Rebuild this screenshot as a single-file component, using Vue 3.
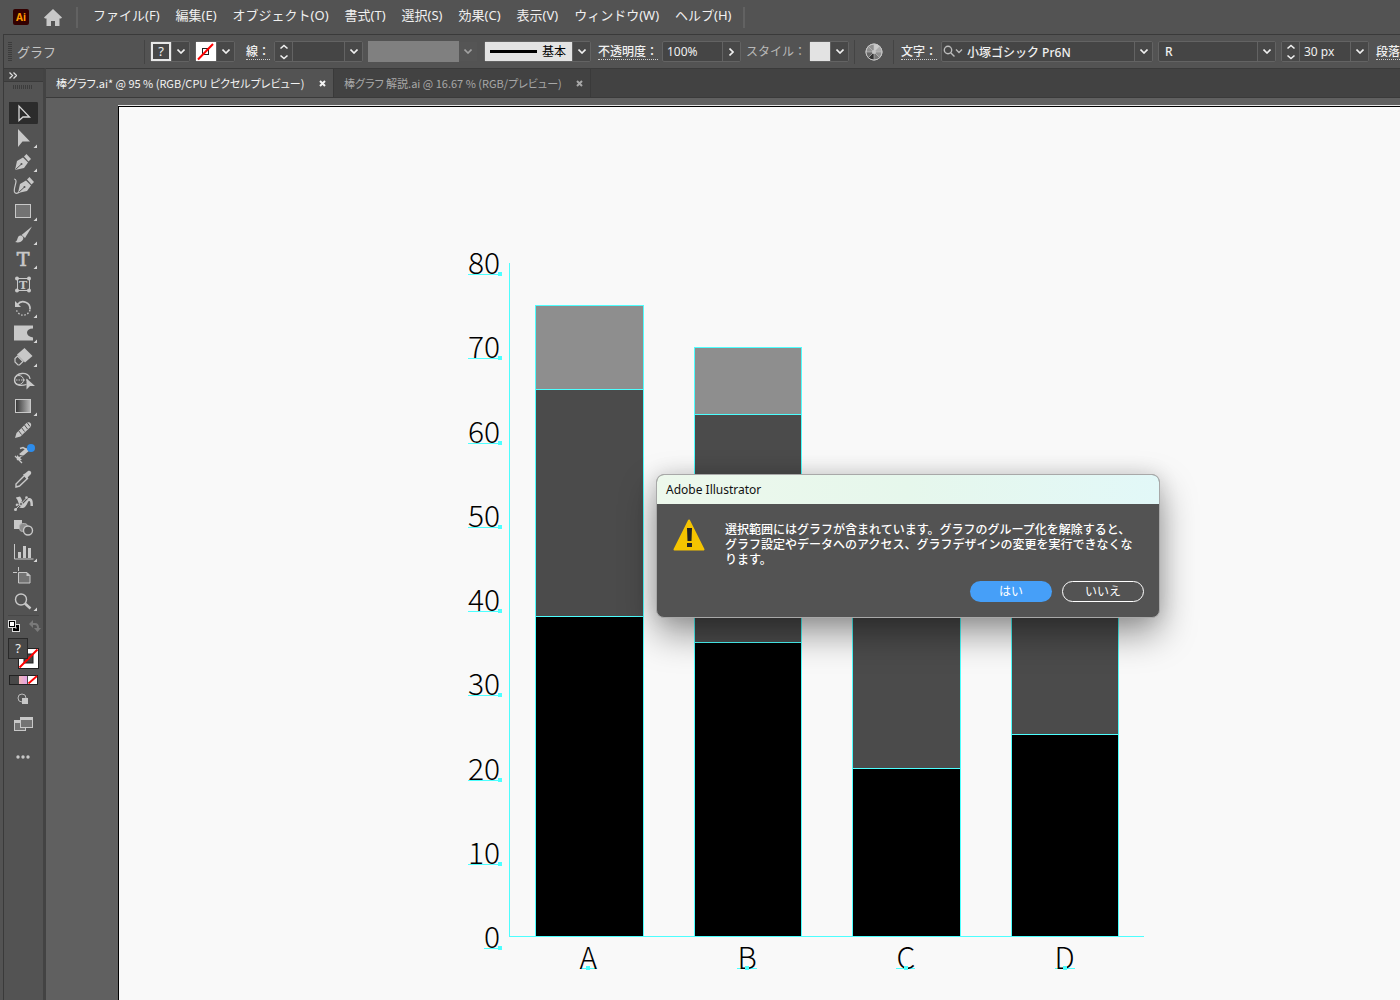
<script setup>
const menus = [
  'ファイル(F)', '編集(E)', 'オブジェクト(O)', '書式(T)', '選択(S)',
  '効果(C)', '表示(V)', 'ウィンドウ(W)', 'ヘルプ(H)',
]

const nib = '<path d="M7 20l2-9 6-3.500 5 5-4 5.500z" fill="#c8c8c8"/><path d="M16 6.500l2.500-2.500 4.500 5-2.500 2.500z" fill="#c8c8c8"/><path d="M7.500 19.500l5.500-5" stroke="#535353"/><circle cx="13.500" cy="14" r="1" fill="#535353"/>'

const tools = [
  { name: '選択', active: true, art: '<path d="M11 5v14.500l4-3.500h6.500z" fill="none" stroke="#d8d8d8" stroke-width="1.300"/>' },
  { name: 'ダイレクト選択', more: true, art: '<path d="M10 3v18l4.500-5.500h7.500z" fill="#c8c8c8"/>' },
  { name: 'ペン', more: true, art: nib },
  { name: '曲線', art: '<g transform="translate(3 -1)">' + nib + '</g><path d="M6 5c5 0-1 9 .5 13 1 2 3 1.500 5 0" fill="none" stroke="#c8c8c8" stroke-width="1.200"/>' },
  { name: '長方形', more: true, art: '<rect x="7.500" y="5.500" width="15" height="13" fill="#737373" stroke="#c8c8c8"/>' },
  { name: 'ブラシ', more: true, art: '<path d="M24 3.500l-7 11.500-3.500-3z" fill="#c8c8c8"/><path d="M12 12.500c2.500 0 4 2 3 4-1.500 3-5 3.500-8 2.500 3-1 2-6 5-6.500z" fill="#c8c8c8"/>' },
  { name: '文字', more: true, art: '<text x="15" y="19" text-anchor="middle" font-family="DejaVu Serif, serif" font-size="19" fill="#c8c8c8" stroke="#c8c8c8" stroke-width=".7">T</text>' },
  { name: '文字タッチ', art: '<rect x="9.500" y="6.500" width="12" height="12" fill="none" stroke="#c8c8c8"/><g fill="#c8c8c8"><circle cx="9" cy="6.500" r="2"/><circle cx="21" cy="6.500" r="2"/><circle cx="9" cy="18.500" r="2"/><circle cx="21" cy="18.500" r="2"/></g><text x="15" y="16.500" text-anchor="middle" font-family="DejaVu Serif, serif" font-size="11" font-weight="700" fill="#c8c8c8">T</text>' },
  { name: '回転', more: true, art: '<path d="M9.500 8.500a7 7 0 0 1 12.500 5" fill="none" stroke="#c8c8c8" stroke-width="1.700"/><path d="M22 14a7 7 0 0 1-13.500 0" fill="none" stroke="#c8c8c8" stroke-width="1.400" stroke-dasharray="1.500 1.700"/><path d="M7 5v6h6z" fill="#c8c8c8"/>' },
  { name: '線幅', more: true, art: '<path d="M6 4.500h19v3c-8 0-8 8 0 9v3h-19z" fill="#c8c8c8"/>' },
  { name: '消しゴム', more: true, art: '<path d="M16.500 3l8 8-7.500 6.500-8-8z" fill="#c8c8c8"/><path d="M9.500 11l5.500 5.500-3.500 3.500h-1.500l-3-3v-3.500z" fill="#535353" stroke="#c8c8c8" stroke-width="1.200"/>' },
  { name: 'シェイプ形成', art: '<ellipse cx="11" cy="11" rx="4.500" ry="4.500" fill="none" stroke="#c8c8c8"/><path d="M6.500 11c0-8 15-9 15.500-1M6.500 11c0 6 7 6 12 4.500" fill="none" stroke="#c8c8c8" stroke-width="1.300"/><path d="M8 11h12" stroke="#c8c8c8" stroke-dasharray="1.500 1"/><path d="M18.500 9.500v11l3.500-3.500h5z" fill="#c8c8c8"/>' },
  { name: 'グラデーション', more: true, art: '<defs><linearGradient id="ramp"><stop stop-color="#333"/><stop offset="1" stop-color="#bbb"/></linearGradient></defs><rect x="7.500" y="5.500" width="15" height="13" fill="url(#ramp)" stroke="#c8c8c8"/>' },
  { name: '鉛筆', art: '<path d="M7 20l1.500-5 10-10c3-2 6 1 4 4l-10 9.500z" fill="#c8c8c8"/><path d="M10.500 12.500l3 4M13.500 9.500l3 4M16.500 7l3 4M19 4.500l3 4" stroke="#535353"/>' },
  { name: 'ものさし', badge: true, art: '<path d="M9 18l10-9.500M7 14l7 7" stroke="#c8c8c8" stroke-width="1.300"/><path d="M9 13v5h5z" fill="#c8c8c8"/><path d="M12.500 13.500l7-6" stroke="#c8c8c8" stroke-width="4"/><path d="M12 6.500l3-1 3.500 2" fill="none" stroke="#c8c8c8" stroke-width="1.500"/><path d="M11 13.500l7 1" stroke="#535353"/>' },
  { name: 'スポイト', art: '<path d="M16.500 8.500l3 3-8 7.500-3.500 1v-3z" fill="none" stroke="#c8c8c8" stroke-width="1.400"/><path d="M15 7.500l2-1 3-2.500c2-1 4 1 3 3l-3 3-1 2.500z" fill="#c8c8c8"/>' },
  { name: 'パペットワープ', art: '<path d="M8 6.500l4-1c2 2 2 5 3 6 2 0 3-4 6-4.500 3 0 4 2 4 8h-2.500c0-3 0-5-1.500-5s-2 6-6 7c-3 .500-6-1-7.500-3l1-1.500 2.500.500c-1-2-1-4-3-6z" fill="#c8c8c8"/><path d="M8 18l11-11" stroke="#535353" stroke-width="2.500"/><path d="M7.500 18.500l11-11.500" stroke="#c8c8c8"/><circle cx="7.500" cy="18.500" r="1.500" fill="#c8c8c8"/><circle cx="13" cy="13" r="1.500" fill="#535353" stroke="#c8c8c8"/><circle cx="18.500" cy="6.500" r="1.300" fill="#c8c8c8"/>' },
  { name: 'ブレンド', art: '<rect x="6" y="4" width="8" height="9" fill="#c8c8c8"/><rect x="11.500" y="7.500" width="8" height="8" rx="3" fill="#8c8c8c" stroke="#b0b0b0"/><circle cx="20" cy="14.500" r="4.500" fill="#535353" stroke="#c8c8c8" stroke-width="1.400"/>' },
  { name: '棒グラフ', more: true, art: '<path d="M6.500 4v15h19" fill="none" stroke="#c8c8c8"/><path d="M10 12h3v6h-3zM15 6h3v12h-3zM20 8h3v10h-3z" fill="#c8c8c8"/>' },
  { name: 'アートボード', art: '<path d="M10.500 8.500h8.500l3 3v7.500h-11.500z" fill="#737373" stroke="#c8c8c8"/><path d="M10.500 3v4M5 8.500h4" stroke="#c8c8c8"/><path d="M18.500 8v4h4" fill="#c8c8c8"/>' },
  { name: 'ズーム', more: true, art: '<circle cx="13" cy="10.500" r="5.500" fill="none" stroke="#c8c8c8" stroke-width="1.400"/><path d="M17 14.500l5.500 5" stroke="#c8c8c8" stroke-width="2.500"/>' },
]

const axisMax = 80
const ticks = [80, 70, 60, 50, 40, 30, 20, 10, 0]
const columns = [
  { label: 'A', values: [10, 27, 38] },
  { label: 'B', values: [8, 27, 35] },
  { label: 'C', values: [5, 25, 20] },
  { label: 'D', values: [6, 20, 24] },
]
const share = (v) => ({ height: (v / axisMax) * 100 + '%' })
</script>

<template>
  <div class="app">
    <header class="menubar">
      <span class="logo">Ai</span>
      <button class="home" aria-label="ホーム">
        <svg width="18" height="17" viewBox="0 0 18 17"><path d="M9 0l9 8.500-1 1h-1.500V17h-4.500v-5H7v5H2.500V9.500H1l-1-1z" fill="#c8c8c8" /></svg>
      </button>
      <i class="bar-sep"></i>
      <nav class="menus">
        <button v-for="m in menus" :key="m">{{ m }}</button>
      </nav>
      <i class="bar-sep"></i>
    </header>

    <section class="options">
      <i class="grip"></i>
      <span class="target">グラフ</span>
      <i class="sep"></i>
      <div class="field w40">
        <button class="swatch unknown">?</button>
        <button class="drop" aria-label="塗り"><svg class="chev" viewBox="0 0 8 5"><path d="M.5.5L4 4 7.500.5" /></svg></button>
      </div>
      <div class="field w40">
        <button class="swatch none" aria-label="線なし">
          <svg width="19" height="19" viewBox="0 0 19 19"><rect x="6.500" y="6.500" width="6" height="6" fill="none" stroke="#222" /><path d="M2 17.500L17 2" stroke="#f00" stroke-width="2" /></svg>
        </button>
        <button class="drop" aria-label="線"><svg class="chev" viewBox="0 0 8 5"><path d="M.5.5L4 4 7.500.5" /></svg></button>
      </div>
      <label class="cap w29 link" for="stroke"><span>線：</span></label>
      <div class="field w89">
        <button class="step" aria-label="増減"><svg width="10" height="16" viewBox="0 0 10 16"><path d="M1.500 4.500L5 1.500l3.500 3M1.500 11.500L5 14.500l3.500-3" /></svg></button>
        <input id="stroke" type="text" value="" />
        <button class="drop" aria-label="線幅"><svg class="chev" viewBox="0 0 8 5"><path d="M.5.5L4 4 7.500.5" /></svg></button>
      </div>
      <div class="profile">
        <i></i>
        <button class="drop dim" aria-label="プロファイル" disabled><svg class="chev" viewBox="0 0 8 5"><path d="M.5.5L4 4 7.500.5" /></svg></button>
      </div>
      <div class="field brush">
        <button class="basic"><i></i>基本</button>
        <button class="drop" aria-label="ブラシ"><svg class="chev" viewBox="0 0 8 5"><path d="M.5.5L4 4 7.500.5" /></svg></button>
      </div>
      <label class="cap w61 link" for="opacity"><span>不透明度：</span></label>
      <div class="field w79">
        <input id="opacity" type="text" value="100%" />
        <button class="drop" aria-label="不透明度"><svg width="5" height="8" viewBox="0 0 5 8"><path d="M.5.5L4 4 .5 7.500" /></svg></button>
      </div>
      <span class="cap w58 soft">スタイル：</span>
      <div class="field w40">
        <button class="swatch plain" aria-label="グラフィックスタイル"></button>
        <button class="drop" aria-label="スタイル"><svg class="chev" viewBox="0 0 8 5"><path d="M.5.5L4 4 7.500.5" /></svg></button>
      </div>
      <i class="sep"></i>
      <button class="wheel" aria-label="オブジェクトを再配色">
        <svg width="18" height="18" viewBox="0 0 18 18"><circle cx="9" cy="9" r="8" fill="#8f8f8f" stroke="#c4c4c4" /><path d="M9 9V1a8 8 0 0 1 5.700 2.300z" fill="#c9c9c9" /><path d="M9 9l5.700-5.700A8 8 0 0 1 17 9z" fill="#aaa" /><path d="M9 9H1a8 8 0 0 0 2.300 5.700z" fill="#666" /><path d="M9 9l-5.700 5.700A8 8 0 0 0 9 17z" fill="#333" /><path d="M9 9l5.700 5.700A8 8 0 0 1 9 17z" fill="#777" /><path d="M9 1v16M1 9h16M3.300 3.300l11.400 11.400M3.300 14.700L14.700 3.300" stroke="#c4c4c4" stroke-width=".6" /><circle cx="9" cy="9" r="8" fill="none" stroke="#c4c4c4" /><circle cx="9" cy="9" r="2" fill="#c4c4c4" /></svg>
      </button>
      <i class="sep"></i>
      <label class="cap w37 link" for="font"><span>文字：</span></label>
      <div class="field w212">
        <svg class="search" width="20" height="13" viewBox="0 0 20 13"><circle cx="5" cy="5" r="3.700" /><path d="M7.700 7.700L11.500 11.500M13 4.500l3 3 3-3" /></svg>
        <input id="font" type="text" class="strong" value="小塚ゴシック Pr6N" />
        <button class="drop" aria-label="フォント"><svg class="chev" viewBox="0 0 8 5"><path d="M.5.5L4 4 7.500.5" /></svg></button>
      </div>
      <div class="field w118">
        <input type="text" class="strong pad" value="R" aria-label="フォントスタイル" />
        <button class="drop" aria-label="スタイル"><svg class="chev" viewBox="0 0 8 5"><path d="M.5.5L4 4 7.500.5" /></svg></button>
      </div>
      <div class="field w88">
        <button class="step" aria-label="増減"><svg width="10" height="16" viewBox="0 0 10 16"><path d="M1.500 4.500L5 1.500l3.500 3M1.500 11.500L5 14.500l3.500-3" /></svg></button>
        <input type="text" value="30 px" aria-label="フォントサイズ" />
        <button class="drop" aria-label="サイズ"><svg class="chev" viewBox="0 0 8 5"><path d="M.5.5L4 4 7.500.5" /></svg></button>
      </div>
      <span class="cap link"><span>段落</span></span>
    </section>

    <div class="workspace">
      <aside class="tools">
        <div class="tools-head">
          <svg width="8" height="7" viewBox="0 0 8 7"><path d="M.5.5l3 3-3 3M4.500.5l3 3-3 3" fill="none" stroke="#ddd" stroke-width="1.300" /></svg>
        </div>
        <i class="grip-h"></i>
        <div class="tool-list">
          <button v-for="t in tools" :key="t.name" :class="{ active: t.active }" :aria-label="t.name">
            <svg width="30" height="24" viewBox="0 0 30 24">
              <g v-html="t.art"></g>
              <path v-if="t.more" d="M29 18.500V22h-3.500z" fill="#d8d8d8" />
              <circle v-if="t.badge" cx="23" cy="6" r="4" fill="#2d8ceb" />
            </svg>
          </button>
        </div>
        <i class="rule"></i>
        <svg width="36" height="154" viewBox="0 0 36 154">
          <g transform="translate(-5 -616)">
            <rect x="12.500" y="624.500" width="7" height="7" fill="#000" stroke="#ddd" />
            <rect x="14.500" y="626.500" width="3" height="3" fill="#535353" stroke="#000" />
            <rect x="8.500" y="620.500" width="7" height="7" fill="#fff" stroke="#ddd" />
            <rect x="9.500" y="621.500" width="5" height="5" fill="#fff" stroke="#000" />
            <path d="M32 624h3q3 0 3 4v1" fill="none" stroke="#7a7a7a" stroke-width="2" />
            <path d="M33 620v8l-4-4zM34 628h7l-3.500 4z" fill="#7a7a7a" />
            <rect x="18.500" y="648.500" width="20" height="20" fill="#fff" stroke="#222" />
            <rect x="24" y="654" width="9" height="9" fill="#444" stroke="#222" />
            <path d="M19.500 667.500l18-18" stroke="#f00" stroke-width="2" />
            <rect x="8.500" y="638.500" width="19" height="20" fill="#484848" stroke="#2a2a2a" />
            <text x="18" y="653" text-anchor="middle" font-family="Noto Sans, sans-serif" font-size="13" fill="#eee">?</text>
            <defs><linearGradient id="pink"><stop stop-color="#f3b7b7" /><stop offset="1" stop-color="#e3a3e6" /></linearGradient></defs>
            <rect x="9.500" y="675.500" width="28" height="9" fill="#484848" stroke="#222" />
            <rect x="19" y="676" width="8" height="8" fill="url(#pink)" />
            <rect x="28" y="676" width="9" height="8" fill="#fff" />
            <path d="M28.500 683.500l8.500-7.500" stroke="#f00" stroke-width="1.800" />
            <circle cx="22" cy="698" r="4" fill="none" stroke="#bbb" />
            <rect x="22" y="698" width="6" height="6" fill="#c8c8c8" />
            <rect x="14.500" y="720.500" width="11" height="10" fill="#737373" stroke="#c8c8c8" />
            <path d="M14 720h12v3h-12z" fill="#c8c8c8" />
            <rect x="20.500" y="717.500" width="12" height="10" fill="#737373" stroke="#c8c8c8" />
            <path d="M20 717h13v3h-13z" fill="#c8c8c8" />
            <g fill="#c8c8c8"><circle cx="18" cy="757" r="1.700" /><circle cx="23" cy="757" r="1.700" /><circle cx="28" cy="757" r="1.700" /></g>
          </g>
        </svg>
      </aside>

      <main class="document">
        <div class="tabs">
          <div class="tab on">
            <span>棒グラフ.ai* @ 95 % (RGB/CPU ピクセルプレビュー)</span>
            <button aria-label="閉じる"><svg width="7" height="7" viewBox="0 0 7 7"><path d="M1 1l5 5M6 1L1 6" /></svg></button>
          </div>
          <div class="tab">
            <span>棒グラフ 解説.ai @ 16.67 % (RGB/プレビュー)</span>
            <button aria-label="閉じる"><svg width="7" height="7" viewBox="0 0 7 7"><path d="M1 1l5 5M6 1L1 6" /></svg></button>
          </div>
        </div>

        <div class="canvas">
          <div class="artboard">
            <div class="chart">
              <div class="y-axis">
                <div v-for="t in ticks" :key="t" class="tick"><span>{{ t }}</span></div>
              </div>
              <div class="plot">
                <div v-for="c in columns" :key="c.label" class="col">
                  <i v-for="(v, i) in c.values" :key="i" :class="'s' + i" :style="share(v)"></i>
                </div>
              </div>
              <div class="x-axis">
                <div v-for="c in columns" :key="c.label"><span>{{ c.label }}</span></div>
              </div>
            </div>

            <div class="dialog" role="dialog" aria-labelledby="dialog-title">
              <h1 id="dialog-title">Adobe Illustrator</h1>
              <div class="message">
                <svg width="32" height="32" viewBox="0 0 32 32"><path d="M16 1.500L30.500 30.500h-29z" fill="#f5c400" stroke="#f5c400" stroke-width="2" stroke-linejoin="round" /><path d="M14 9h5l-.5 13h-4zM14 24h5v4h-5z" fill="#222" /></svg>
                <p>選択範囲にはグラフが含まれています。グラフのグループ化を解除すると、<br />グラフ設定やデータへのアクセス、グラフデザインの変更を実行できなくな<br />ります。</p>
              </div>
              <div class="actions">
                <button class="yes">はい</button>
                <button class="no">いいえ</button>
              </div>
            </div>
          </div>
        </div>
      </main>
    </div>
  </div>
</template>

<style>
body {
  background: #535353;
}
</style>

<style scoped>
* {
  box-sizing: border-box;
}
button,
input {
  margin: 0;
  padding: 0;
  border: 0;
  border-radius: 0;
  background: none;
  color: inherit;
  font: inherit;
}
svg {
  display: block;
  flex: none;
}
i {
  display: block;
  flex: none;
}
.app {
  display: flex;
  flex-direction: column;
  min-height: 100vh;
  overflow: hidden;
  background: #535353;
  color: #f0f0f0;
  font: 12px/16px "Noto Sans", "Noto Sans CJK JP", sans-serif;
}
.menubar {
  display: flex;
  align-items: center;
  height: 34px;
  padding-left: 13px;
  font-size: 13px;
}
.logo {
  width: 16px;
  height: 16px;
  border-radius: 2px;
  background: #330000;
  color: #ff9a00;
  font: 700 10px/17px "Noto Sans", sans-serif;
  text-align: center;
}
.home {
  margin: 0 14px 0 15px;
}
.bar-sep {
  width: 2px;
  height: 21px;
  background: #626262;
}
.menus {
  display: flex;
  gap: 16px;
  padding: 0 12px 5px 15px;
  white-space: nowrap;
}
.options {
  display: flex;
  align-items: center;
  gap: 5px;
  height: 34px;
  margin-left: 3px;
  padding-left: 4px;
  border-top: 1px solid #3a3a3a;
  border-left: 1px solid #3a3a3a;
  white-space: nowrap;
}
.options > * {
  flex: none;
}
.grip {
  width: 4px;
  height: 19px;
  background: repeating-linear-gradient(#3c3c3c 0 1px, transparent 1px 2px);
}
.target {
  width: 122px;
  color: #c4c4c4;
  font-size: 13px;
}
.sep {
  width: 1px;
  height: 24px;
  background: #444;
}
.field {
  display: flex;
  align-items: center;
  height: 21px;
  border: 1px solid #636363;
  border-radius: 2px;
  background: #454545;
}
.field input {
  flex: 1;
  min-width: 0;
  height: 19px;
  padding-left: 4px;
}
.field input.strong {
  font-weight: 500;
}
.field input.pad {
  padding-left: 6px;
}
.w29 { width: 29px; }
.w37 { width: 37px; }
.w40 { width: 40px; }
.w58 { width: 58px; }
.w61 { width: 61px; }
.w79 { width: 79px; }
.w88 { width: 88px; }
.w89 { width: 89px; }
.w118 { width: 118px; }
.w212 { width: 212px; }
.drop,
.step {
  display: flex;
  align-items: center;
  justify-content: center;
  width: 18px;
  height: 19px;
  border-left: 1px solid #636363;
  background: #484848;
  flex: none;
}
.step {
  border-left: 0;
  border-right: 1px solid #636363;
}
.drop svg,
.step svg {
  fill: none;
  stroke: #f0f0f0;
  stroke-width: 1.6;
}
.chev {
  width: 8px;
  height: 5px;
}
.drop.dim {
  border: 0;
  background: #585858;
  opacity: 0.5;
}
.swatch {
  flex: 1;
  height: 19px;
  background: #fff;
}
.swatch.unknown {
  border: 2px solid #e8e8e8;
  background: #484848;
  font-size: 13px;
  line-height: 15px;
}
.swatch.plain {
  background: #e3e3e3;
}
.cap {
  line-height: 18px;
}
.cap.link {
  padding-left: 2px;
  font-weight: 500;
}
.cap.link span {
  display: block;
  width: max-content;
  height: 17px;
  border-bottom: 1px dotted #ccc;
}
.cap.w29 {
  padding-left: 6px;
}
.cap.soft {
  color: #b8b8b8;
}
.profile {
  display: flex;
  align-items: center;
  width: 109px;
}
.profile i {
  flex: 1;
  height: 21px;
  background: #808080;
}
.brush {
  width: 107px;
  margin-left: 2px;
}
.basic {
  display: flex;
  align-items: center;
  flex: 1;
  gap: 5px;
  height: 19px;
  padding-left: 5px;
  background: #e3e3e3;
  color: #000;
}
.basic i {
  width: 47px;
  height: 3px;
  background: #000;
}
.wheel {
  width: 28px;
  padding-left: 5px;
}
.search {
  margin: 0 0 0 1px;
  fill: none;
  stroke: #bbb;
  stroke-width: 1.4;
}
.workspace {
  display: flex;
  flex: 1;
}
.tools {
  display: flex;
  flex-direction: column;
  align-items: flex-start;
  width: 43px;
  margin-left: 3px;
  padding-left: 1px;
  border-left: 1px solid #3a3a3a;
  border-right: 3px solid #434343;
  border-top: 1px solid #3a3a3a;
}
.tools-head {
  align-self: stretch;
  height: 13px;
  margin-left: -1px;
  padding: 3px 0 0 5px;
  border-bottom: 1px solid #3a3a3a;
  background: #454545;
}
.grip-h {
  width: 20px;
  height: 4px;
  margin: 3px 0 12px 8px;
  background: repeating-linear-gradient(90deg, #3c3c3c 0 1px, transparent 1px 2px);
}
.tool-list {
  display: flex;
  flex-direction: column;
  height: 512px;
  margin-left: 3px;
}
.tool-list button {
  display: flex;
  align-items: center;
  flex: 1;
  width: 30px;
}
.tool-list .active svg {
  border-radius: 3px;
  background: linear-gradient(#2c2c2c, #2c2c2c) 1px 1px / 29px 22px no-repeat;
}
.rule {
  width: 31px;
  height: 1px;
  margin: 2px 0 0 3px;
  background: #474747;
}
.document {
  display: flex;
  flex-direction: column;
  flex: 1;
  min-width: 0;
}
.tabs {
  display: flex;
  height: 30px;
  border-top: 1px solid #3a3a3a;
  border-bottom: 1px solid #3a3a3a;
  background: #424242;
}
.tab {
  display: flex;
  align-items: center;
  justify-content: space-between;
  width: 257px;
  padding: 0 7px 0 10px;
  border-right: 1px solid #3a3a3a;
  color: #a8a8a8;
  font: 11px/16px "Noto Sans CJK JP", sans-serif;
  font-feature-settings: "palt";
  white-space: nowrap;
}
.tab.on {
  width: 288px;
  background: #535353;
  color: #f4f4f4;
}
.tab svg {
  stroke: currentColor;
  stroke-width: 2;
}
.canvas {
  display: flex;
  flex: 1;
  padding: 8px 0 0 72px;
  background: #606060;
}
.artboard {
  position: relative;
  flex: 1;
  min-width: 0;
  border-top: 1px solid #000;
  border-left: 1px solid #000;
  background: #f9f9f9;
  box-shadow: 0 -1px 0 #e6e6e6;
  color: #000;
}
.chart {
  display: grid;
  grid-template-columns: 43px 635px;
  grid-template-rows: 674px auto;
  margin: 156px 0 0 347px;
  font: 300 30px/30px "Noto Sans CJK JP", sans-serif;
}
.y-axis {
  display: flex;
  flex-direction: column;
  justify-content: space-between;
  align-items: flex-end;
  padding-right: 8px;
}
.tick {
  display: flex;
  align-items: center;
  height: 0;
}
.tick span,
.x-axis span {
  position: relative;
  display: block;
  height: 25px;
  line-height: 24px;
  border-bottom: 1px solid #4dffff;
}
.tick span {
  height: 24px;
  padding-right: 1px;
  line-height: 20px;
}
.tick span::after,
.x-axis span::after {
  content: "";
  position: absolute;
  right: -1px;
  bottom: -2px;
  width: 4px;
  height: 4px;
  background: #4dffff;
}
.plot {
  display: flex;
  border-left: 1px solid #4dffff;
  border-bottom: 1px solid #4dffff;
}
.col {
  display: flex;
  flex-direction: column;
  justify-content: flex-end;
  flex: 1;
  padding: 0 25px;
}
.col i {
  border: 1px solid #4dffff;
  border-bottom: 0;
}
.s0 { background: #8e8e8e; }
.s1 { background: #4b4b4b; }
.s2 { background: #000; }
.x-axis {
  display: flex;
  grid-column: 2;
  padding-top: 7px;
}
.x-axis div {
  display: flex;
  justify-content: center;
  flex: 1;
}
.x-axis span::after {
  right: calc(50% - 2px);
}
.dialog {
  position: absolute;
  top: 367px;
  left: 537px;
  width: 504px;
  overflow: hidden;
  border: 1px solid #a8a8a8;
  border-radius: 8px;
  background: #535353;
  box-shadow: 0 16px 36px rgba(0, 0, 0, 0.4), 0 0 20px rgba(0, 0, 0, 0.12);
  color: #fff;
}
.dialog h1 {
  margin: 0;
  padding: 0 9px;
  background: linear-gradient(90deg, #edf8ec, #e6f7ec 50%, #e2f8f8);
  color: #111;
  font: 12px/29px "Noto Sans", sans-serif;
}
.message {
  display: flex;
  gap: 20px;
  padding: 15px 16px 0;
}
.message p {
  margin: 2px 0 0;
  font: 500 12px/15px "Noto Sans CJK JP", sans-serif;
  white-space: nowrap;
}
.actions {
  display: flex;
  justify-content: flex-end;
  gap: 10px;
  padding: 15px 15px 15px;
}
.actions button {
  width: 82px;
  height: 21px;
  border-radius: 11px;
  line-height: 19px;
}
.yes {
  background: #469ff8;
}
.actions .no {
  border: 1px solid #fff;
}
</style>
